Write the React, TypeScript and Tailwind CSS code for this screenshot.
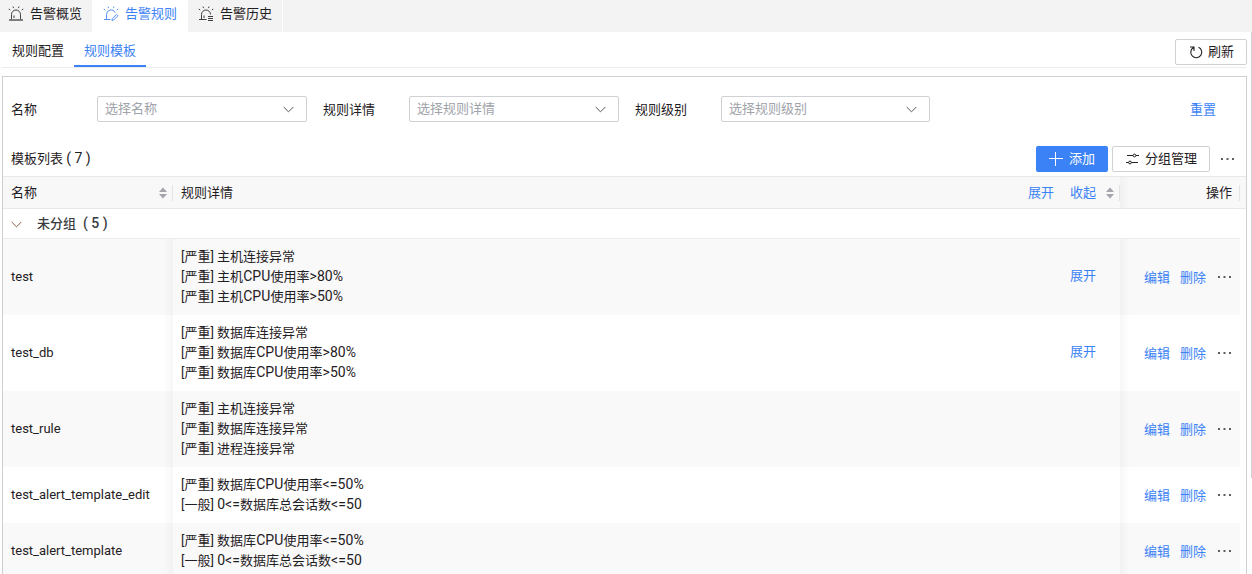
import type { ReactNode } from 'react'

type TabIcon = 'overview' | 'rule' | 'history'

interface Tab {
  label: string
  icon: TabIcon
  width: string
}

interface TemplateRow {
  name: string
  details: string[]
  expandable?: boolean
}

const tabs: Tab[] = [
  { label: '告警概览', icon: 'overview', width: 'w-[92px] pl-2' },
  { label: '告警规则', icon: 'rule', width: 'w-24 pl-[11px]' },
  { label: '告警历史', icon: 'history', width: 'w-[94px] pl-[10px]' },
]

const filters = [
  { label: '名称', placeholder: '选择名称', width: 'w-[210px]' },
  { label: '规则详情', placeholder: '选择规则详情', width: 'w-[210px]' },
  { label: '规则级别', placeholder: '选择规则级别', width: 'w-[209px]' },
]

const rows: TemplateRow[] = [
  {
    name: 'test',
    details: ['[严重] 主机连接异常', '[严重] 主机CPU使用率>80%', '[严重] 主机CPU使用率>50%'],
    expandable: true,
  },
  {
    name: 'test_db',
    details: ['[严重] 数据库连接异常', '[严重] 数据库CPU使用率>80%', '[严重] 数据库CPU使用率>50%'],
    expandable: true,
  },
  {
    name: 'test_rule',
    details: ['[严重] 主机连接异常', '[严重] 数据库连接异常', '[严重] 进程连接异常'],
  },
  {
    name: 'test_alert_template_edit',
    details: ['[严重] 数据库CPU使用率<=50%', '[一般] 0<=数据库总会话数<=50'],
  },
  {
    name: 'test_alert_template',
    details: ['[严重] 数据库CPU使用率<=50%', '[一般] 0<=数据库总会话数<=50'],
  },
]

function AlarmIcon({ kind }: { kind: TabIcon }) {
  return (
    <svg width="16" height="16" viewBox="0 0 16 16" fill="none" stroke="currentColor" className="shrink-0 opacity-85">
      <path d="M5 .6l.6 1.5M11 .6l-.6 1.5M.8 3l1.4 1M15.2 3l-1.4 1" />
      {kind === 'overview' && (
        <>
          <path d="M3.5 13V8.5a4.5 4.5 0 0 1 9 0V13M6 12V9.5" />
          <path d="M1 14h14" strokeWidth="1.3" />
        </>
      )}
      {kind === 'rule' && (
        <>
          <path d="M3.5 13V8.5a4.5 4.5 0 0 1 8.6-1.9M1 13.5h6.5" />
          <path d="M9 14.5l.3-1.9 4.2-4.2 1.4 1.4-4.2 4.2z" />
        </>
      )}
      {kind === 'history' && (
        <>
          <path d="M3.5 13V8.5a4.5 4.5 0 0 1 9 0M1 13.5h7.5M6 12V9.5" />
          <path d="M10 10.5h5M10 12.5h5M10 14.5h5" />
        </>
      )}
    </svg>
  )
}

function ChevronDown({ className = '' }: { className?: string }) {
  return (
    <svg width="11" height="7" viewBox="0 0 11 7" fill="none" stroke="currentColor" className={`shrink-0 ${className}`}>
      <path d="M.7 1l4.8 4.8L10.3 1" />
    </svg>
  )
}

function Sorter() {
  return (
    <svg width="8" height="12" viewBox="0 0 8 12" fill="#a3a5ab" className="shrink-0">
      <path d="M4 0.5L8 5H0zM4 11.5L0 7h8z" />
    </svg>
  )
}

function More({ className = '' }: { className?: string }) {
  return (
    <svg width="13" height="4" viewBox="0 0 13 4" fill="#5c5e63" className={`shrink-0 ${className}`}>
      <path d="M0 1h2v2H0zM5.5 1h2v2h-2zM11 1h2v2h-2z" />
    </svg>
  )
}

function LinkButton({ children, className = '' }: { children: ReactNode; className?: string }) {
  return <button className={`shrink-0 whitespace-nowrap text-[#3b82f6] ${className}`}>{children}</button>
}

// soft edge next to the fixed columns
function LeftShadow() {
  return <div className="w-2.5 shrink-0 self-stretch bg-linear-to-r from-transparent to-black/3" />
}

function RightShadow() {
  return <div className="w-2.5 shrink-0 self-stretch bg-linear-to-r from-black/3 to-transparent" />
}

// latin runs are set slightly larger than the surrounding Chinese text
function DetailLine({ text }: { text: string }) {
  return (
    <p className="h-5">
      {text.split(/(CPU|[<>=0-9%]+)/).map((part, i) =>
        i % 2 === 1 ? (
          <span key={i} className="text-[14px] leading-none tracking-[0.1px]">{part}</span>
        ) : (
          part
        )
      )}
    </p>
  )
}

export default function App() {
  return (
    <div className="flex h-[574px] w-[1252px] flex-col overflow-hidden bg-white font-[Roboto,'Noto_Sans_CJK_SC',sans-serif] text-[13px] leading-5 text-[#1f2023]">
      <nav className="flex h-8 shrink-0 bg-[#f3f3f3]">
        {tabs.map(tab => (
          <button
            key={tab.label}
            className={`flex items-center gap-[6px] whitespace-nowrap pb-1 ${tab.width} ${
              tab.icon === 'rule' ? 'bg-white text-[#3b82f6]' : ''
            }`}
          >
            <AlarmIcon kind={tab.icon} />
            {tab.label}
          </button>
        ))}
        <div className="w-px bg-white" />
      </nav>

      <div className="flex min-h-0 flex-1">
        <div className="flex w-[1251px] flex-col">
          <div className="ml-0.5 mr-1 flex h-9 shrink-0 items-center justify-between border-b border-[#ececee]">
            <div className="flex h-full">
              <button className="h-[35px] w-[72px] border-b-2 border-transparent pt-1">规则配置</button>
              <button className="h-[35px] w-[72px] border-b-2 border-[#3b82f6] pt-1 text-[#3b82f6]">规则模板</button>
            </div>
            <button className="mt-[5px] flex h-[26px] w-[72px] items-center gap-1.5 rounded-xs border border-[#d0d1d5] pl-[13px]">
              <svg width="14" height="14" viewBox="0 0 14 14" fill="none" stroke="currentColor" strokeWidth="1.1" className="-mr-px">
                <path d="M4.5 2.5A5.5 5.5 0 1 0 9.5 2.2M1 2h4v4" />
              </svg>
              刷新
            </button>
          </div>

          <main className="ml-0.5 mr-1 mt-2 flex min-h-0 flex-1 flex-col border border-b-0 border-[#cfcfd3]">
            <div className="flex h-[64px] shrink-0 items-center pl-2">
              {filters.map(filter => (
                <label key={filter.label} className="mr-4 flex items-center">
                  <span className="w-[86px] pt-0.5">{filter.label}</span>
                  <span
                    className={`flex h-[26px] items-center justify-between rounded-xs border border-[#d0d1d5] pl-[7px] pr-3 text-[#a0a3aa] ${filter.width}`}
                  >
                    {filter.placeholder}
                    <ChevronDown className="mt-px text-[#55575e]" />
                  </span>
                </label>
              ))}
              <LinkButton className="ml-auto mr-[30px] pt-0.5">重置</LinkButton>
            </div>

            <div className="flex h-[35px] shrink-0 items-center pl-2 pr-3">
              <span className="flex-1">
                模板列表 <span className="text-[14px] leading-none">( 7 )</span>
              </span>
              <button className="flex h-[26px] w-[72px] items-center gap-[6px] rounded-xs bg-[#3b82f6] pl-[13px] text-white">
                <svg width="14" height="14" viewBox="0 0 14 14" stroke="currentColor">
                  <path d="M0 6.5h14M6.5 0v14" />
                </svg>
                添加
              </button>
              <button className="ml-1 flex h-[26px] w-[98px] items-center gap-[6px] rounded-xs border border-[#d0d1d5] pl-[13px]">
                <svg width="13" height="12" viewBox="0 0 13 12" fill="none" stroke="currentColor">
                  <path d="M1 2.5h6M10 2.5h3M0 9.5h2.5M5.5 9.5h6.5" />
                  <circle cx="8.5" cy="2.5" r="1.4" />
                  <circle cx="4" cy="9.5" r="1.4" />
                </svg>
                分组管理
              </button>
              <More className="ml-[11px]" />
            </div>

            <div className="flex h-[33px] shrink-0 border-y border-[#e8e8ea] bg-[#f8f8f8]">
              <div className="flex w-[169px] items-center pl-2">
                <span className="flex-1">名称</span>
                <Sorter />
                <div className="w-[5px]" />
              </div>
              <div className="h-4 w-px self-center bg-[#e4e4e7]" />
              <div className="flex flex-1 items-center pl-2">
                <span className="flex-1">规则详情</span>
                <LinkButton className="mr-4">展开</LinkButton>
                <LinkButton className="mr-2.5">收起</LinkButton>
                <Sorter />
                <div className="ml-[5px] h-4 w-px bg-[#e4e4e7]" />
              </div>
              <RightShadow />
              <div className="flex w-[116px] items-center justify-end pr-1.5">
                操作
                <div className="ml-[7px] h-4 w-px bg-[#e4e4e7]" />
              </div>
            </div>

            <div className="mr-1.5 flex h-[30px] shrink-0 items-center gap-[15px] border-b border-[#ececee] pl-2 font-medium text-[#3a3c42]">
              <ChevronDown className="mt-0.5 text-[#8a5a4c]" />
              <span>
                未分组<span className="ml-[7px] text-[14px] leading-none">( 5 )</span>
              </span>
            </div>

            {rows.map(row => (
              <div key={row.name} className="mr-1.5 flex shrink-0 items-center odd:bg-[#f9f9f9] even:bg-white">
                <div className="w-40 pl-2">{row.name}</div>
                <LeftShadow />
                <div className="flex-1 py-2 pl-2">
                  {row.details.map(detail => (
                    <DetailLine key={detail} text={detail} />
                  ))}
                </div>
                {row.expandable && <LinkButton className="mr-6 pb-0.5">展开</LinkButton>}
                <RightShadow />
                <div className="flex w-[110px] items-center pl-3.5">
                  <LinkButton className="mr-2.5 pt-0.5">编辑</LinkButton>
                  <LinkButton className="mr-3 pt-0.5">删除</LinkButton>
                  <More />
                </div>
              </div>
            ))}
          </main>
        </div>
        <div className="h-[446px] w-px bg-[#d0d0d3]" />
      </div>
    </div>
  )
}
